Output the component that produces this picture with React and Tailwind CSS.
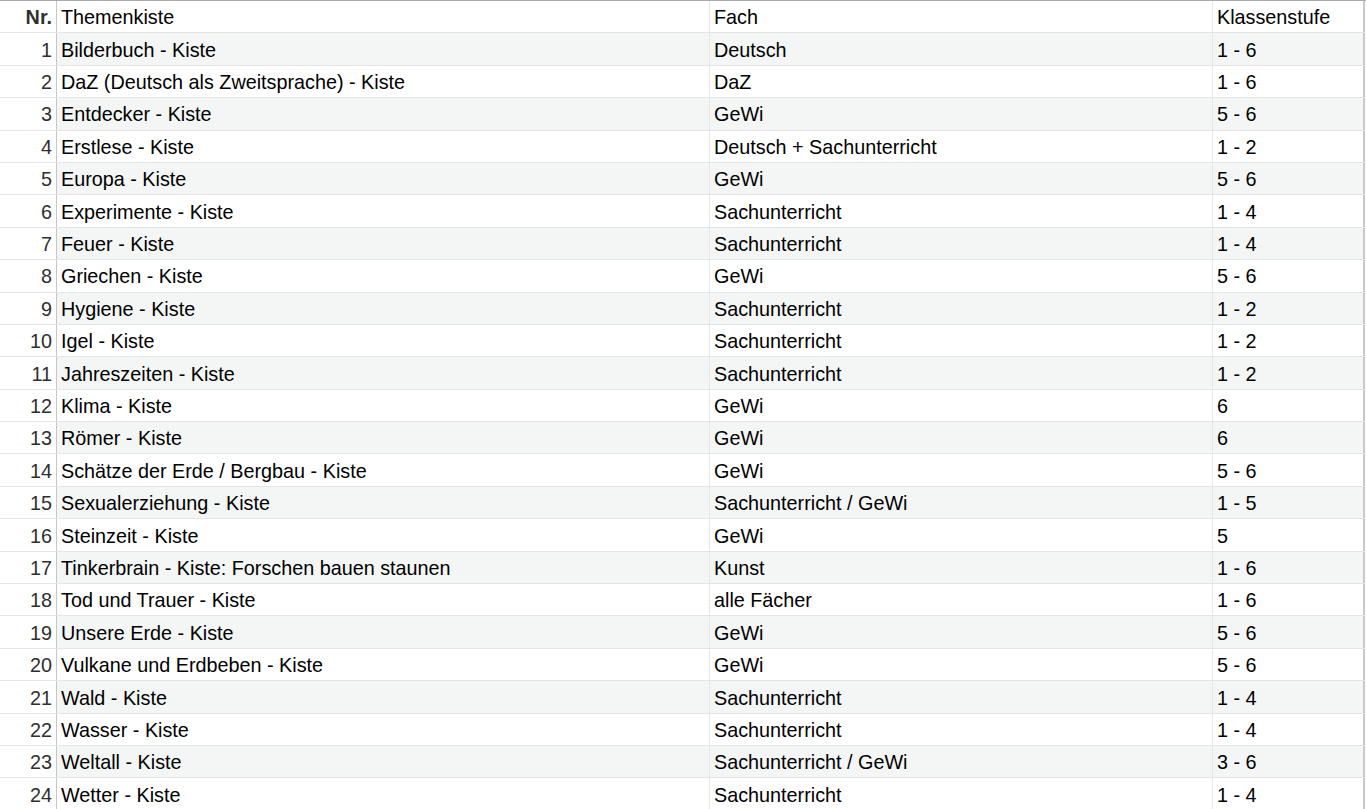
const ROWS = [
  ["Bilderbuch - Kiste", "Deutsch", "1 - 6"],
  ["DaZ (Deutsch als Zweitsprache) - Kiste", "DaZ", "1 - 6"],
  ["Entdecker - Kiste", "GeWi", "5 - 6"],
  ["Erstlese - Kiste", "Deutsch + Sachunterricht", "1 - 2"],
  ["Europa - Kiste", "GeWi", "5 - 6"],
  ["Experimente - Kiste", "Sachunterricht", "1 - 4"],
  ["Feuer - Kiste", "Sachunterricht", "1 - 4"],
  ["Griechen - Kiste", "GeWi", "5 - 6"],
  ["Hygiene - Kiste", "Sachunterricht", "1 - 2"],
  ["Igel - Kiste", "Sachunterricht", "1 - 2"],
  ["Jahreszeiten - Kiste", "Sachunterricht", "1 - 2"],
  ["Klima - Kiste", "GeWi", "6"],
  ["Römer - Kiste", "GeWi", "6"],
  ["Schätze der Erde / Bergbau - Kiste", "GeWi", "5 - 6"],
  ["Sexualerziehung - Kiste", "Sachunterricht / GeWi", "1 - 5"],
  ["Steinzeit - Kiste", "GeWi", "5"],
  ["Tinkerbrain - Kiste: Forschen bauen staunen", "Kunst", "1 - 6"],
  ["Tod und Trauer - Kiste", "alle Fächer", "1 - 6"],
  ["Unsere Erde - Kiste", "GeWi", "5 - 6"],
  ["Vulkane und Erdbeben - Kiste", "GeWi", "5 - 6"],
  ["Wald - Kiste", "Sachunterricht", "1 - 4"],
  ["Wasser - Kiste", "Sachunterricht", "1 - 4"],
  ["Weltall - Kiste", "Sachunterricht / GeWi", "3 - 6"],
  ["Wetter - Kiste", "Sachunterricht", "1 - 4"],
];

function Row({ nr, cells, striped, header }) {
  const bg = striped ? "bg-[#f3f6f5]" : "bg-white";
  return (
    <div className="flex h-[32.4px] border-b border-[#e4e6e5]">
      <div
        className={`w-[57px] shrink-0 flex items-center justify-end pr-[4px] pt-[3px] border-r border-[#c6c6c6] bg-white text-[#2f2f2f] ${
          header ? "font-bold" : ""
        }`}
      >
        {nr}
      </div>
      <div className={`w-[653px] shrink-0 flex items-center pl-[4px] pt-[3px] border-r border-[#e6e8e7] ${bg}`}>{cells[0]}</div>
      <div className={`w-[503px] shrink-0 flex items-center pl-[4px] pt-[3px] border-r border-[#e6e8e7] ${bg}`}>{cells[1]}</div>
      <div className={`w-[150px] shrink-0 flex items-center pl-[4px] pt-[3px] ${bg}`}>{cells[2]}</div>
      <div className="w-[2px] shrink-0 bg-[#c8c8c8]" />
    </div>
  );
}

export default function App() {
  return (
    <div className="w-[1366px] h-[809px] overflow-hidden bg-white border-t border-[#a9a9a9] text-[19.8px] leading-none text-black font-['Liberation_Sans',Arial,sans-serif]">
      <Row nr="Nr." cells={["Themenkiste", "Fach", "Klassenstufe"]} header />
      {ROWS.map((r, i) => (
        <Row key={i} nr={i + 1} cells={r} striped={i % 2 === 0} />
      ))}
    </div>
  );
}
